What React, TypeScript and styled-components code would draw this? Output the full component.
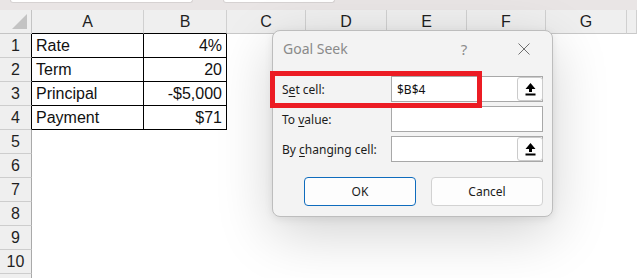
import React from 'react';
import styled, { createGlobalStyle } from 'styled-components';

const GlobalStyle = createGlobalStyle`
  html, body {
    margin: 0;
    padding: 0;
    background: #ffffff;
    overflow: hidden;
  }
  * {
    box-sizing: border-box;
  }
`;

const Page = styled.div`
  position: relative;
  width: 637px;
  height: 278px;
  overflow: hidden;
  background: #ffffff;
  font-family: 'Liberation Sans', Arial, sans-serif;
`;

const TopStrip = styled.div`
  height: 10px;
  background: #e9e5e5;
  display: flex;
  align-items: flex-start;
`;

const TopBox = styled.div<{ $w: number; $ml: number }>`
  width: ${p => p.$w}px;
  margin-left: ${p => p.$ml}px;
  height: 3px;
  background: #ffffff;
  border: 1px solid #d6d2d2;
  border-top: 0;
  border-radius: 0 0 3px 3px;
`;

const Sheet = styled.div`
  display: grid;
  grid-template-columns: 32px 112px 83px 79px 81px 80px 79px 81px 1fr;
  grid-auto-rows: 24px;
`;

const Corner = styled.div`
  position: relative;
  background: #efefef;
  border-right: 1px solid #c4c4c4;
  border-bottom: 1px solid #c4c4c4;
  &::after {
    content: '';
    position: absolute;
    right: 4px;
    bottom: 4px;
    width: 15px;
    height: 15px;
    background: #c3c3c3;
    clip-path: polygon(100% 0, 100% 100%, 0 100%);
  }
`;

const ColHead = styled.div<{ $dark?: boolean }>`
  background: #efefef;
  border-right: 1px solid #d0d0d0;
  border-bottom: 1px solid ${p => (p.$dark ? '#000000' : '#c8c8c8')};
  display: flex;
  align-items: center;
  justify-content: center;
  font-size: 16px;
  color: #1f1f1f;
  padding-top: 1px;
`;

const RowHead = styled.div<{ $dark?: boolean }>`
  background: #efefef;
  border-right: 1px solid ${p => (p.$dark ? '#000000' : '#a9a9a9')};
  border-bottom: 1px solid #cdcdcd;
  display: flex;
  align-items: center;
  justify-content: center;
  font-size: 16px;
  color: #1f1f1f;
  padding-top: 1px;
`;

const Cell = styled.div<{ $boxed?: boolean; $right?: boolean }>`
  border-right: 1px solid ${p => (p.$boxed ? '#000000' : 'transparent')};
  border-bottom: 1px solid ${p => (p.$boxed ? '#000000' : 'transparent')};
  display: flex;
  align-items: center;
  justify-content: ${p => (p.$right ? 'flex-end' : 'flex-start')};
  padding: 1px 4px 0 4px;
  font-size: 16px;
  color: #111111;
  white-space: nowrap;
`;

const Dialog = styled.div`
  position: absolute;
  left: 272px;
  top: 30px;
  width: 281px;
  height: 187px;
  background: #f3f3f3;
  border: 1px solid #bdbdbd;
  border-radius: 8px;
  box-shadow: 0 16px 56px rgba(0, 0, 0, 0.18), 0 2px 8px rgba(0, 0, 0, 0.08);
  font-family: 'Noto Sans', 'Segoe UI', sans-serif;
  color: #1b1b1b;
`;

const TitleBar = styled.div`
  height: 35px;
  display: flex;
  align-items: center;
  padding-left: 10px;
`;

const Title = styled.div`
  flex: 1;
  font-size: 14px;
  color: #8a8a8a;
  padding-bottom: 1px;
`;

const HelpMark = styled.div`
  width: 46px;
  text-align: center;
  font-size: 15px;
  color: #8c8c8c;
  margin-right: 14px;
`;

const CloseBox = styled.div`
  width: 46px;
  display: flex;
  justify-content: center;
  margin-right: 5px;
`;

const Body = styled.div`
  padding: 10px 9px 9px 9px;
  display: flex;
  flex-direction: column;
  gap: 4px;
`;

const FieldRow = styled.div`
  display: grid;
  grid-template-columns: 109px 152px;
  align-items: center;
  height: 26px;
`;

const Label = styled.div`
  font-size: 12px;
  color: #1b1b1b;
  u {
    text-decoration-thickness: 1px;
    text-underline-offset: 2px;
  }
`;

const InputBox = styled.div`
  height: 26px;
  background: #ffffff;
  border: 1px solid #a8a8a8;
  display: flex;
  align-items: center;
  padding-left: 5px;
  font-size: 12px;
  color: #111111;
`;

const RefButton = styled.div`
  margin-left: auto;
  margin-right: -1px;
  width: 26px;
  height: 24px;
  background: #fdfdfd;
  border: 1px solid #cbcbcb;
  border-radius: 3px;
  display: flex;
  align-items: center;
  justify-content: center;
`;

const RedFrame = styled.div`
  position: absolute;
  left: -3px;
  top: 40px;
  width: 212px;
  height: 37px;
  border: 5px solid #ec1c24;
  pointer-events: none;
`;

const ButtonRow = styled.div`
  display: flex;
  justify-content: flex-end;
  gap: 15px;
  margin-top: 11px;
`;

const DlgButton = styled.div<{ $primary?: boolean }>`
  width: 112px;
  height: 29px;
  background: #fdfdfd;
  border: 1px solid ${p => (p.$primary ? '#0f6cbd' : '#d2d2d2')};
  border-radius: 4px;
  display: flex;
  align-items: center;
  justify-content: center;
  font-size: 12px;
  color: #1b1b1b;
`;

const UploadIcon = () => (
  <svg width="11" height="14" viewBox="0 0 11 14">
    <path d="M5.5 1 L10.5 7 L7 7 L7 10 L4 10 L4 7 L0.5 7 Z" fill="#000" />
    <rect x="0.5" y="11.5" width="10" height="2" fill="#000" />
  </svg>
);

const CloseIcon = () => (
  <svg width="12" height="12" viewBox="0 0 12 12">
    <path d="M0.5 0.5 L11.5 11.5 M11.5 0.5 L0.5 11.5" stroke="#6f6f6f" strokeWidth="1" />
  </svg>
);

const columns = ['A', 'B', 'C', 'D', 'E', 'F', 'G', ''];

const data: [string, string][] = [
  ['Rate', '4%'],
  ['Term', '20'],
  ['Principal', '-$5,000'],
  ['Payment', '$71'],
];

// row 11 only peeks in at the bottom edge, its number is off screen
const visibleRows = 10;

export default function App() {
  const rows = Array.from({ length: 11 }, (_, i) => i + 1);

  return (
    <Page>
      <GlobalStyle />
      <TopStrip>
        <TopBox $w={183} $ml={10} />
        <TopBox $w={112} $ml={30} />
      </TopStrip>
      <Sheet>
        <Corner />
        {columns.map((c, i) => (
          <ColHead key={i} $dark={i < 2}>
            {c}
          </ColHead>
        ))}
        {rows.map(r => {
          const rec = data[r - 1];
          return (
            <React.Fragment key={r}>
              <RowHead $dark={!!rec}>{r <= visibleRows ? r : ''}</RowHead>
              <Cell $boxed={!!rec}>{rec ? rec[0] : ''}</Cell>
              <Cell $boxed={!!rec} $right>
                {rec ? rec[1] : ''}
              </Cell>
              {columns.slice(2).map((_, i) => (
                <Cell key={i} />
              ))}
            </React.Fragment>
          );
        })}
      </Sheet>

      <Dialog>
        <TitleBar>
          <Title>Goal Seek</Title>
          <HelpMark>?</HelpMark>
          <CloseBox>
            <CloseIcon />
          </CloseBox>
        </TitleBar>
        <Body>
          <FieldRow>
            <Label>
              S<u>e</u>t cell:
            </Label>
            <InputBox>
              $B$4
              <RefButton>
                <UploadIcon />
              </RefButton>
            </InputBox>
          </FieldRow>
          <FieldRow>
            <Label>
              To <u>v</u>alue:
            </Label>
            <InputBox />
          </FieldRow>
          <FieldRow>
            <Label>
              By <u>c</u>hanging cell:
            </Label>
            <InputBox>
              <RefButton>
                <UploadIcon />
              </RefButton>
            </InputBox>
          </FieldRow>
          <ButtonRow>
            <DlgButton $primary>OK</DlgButton>
            <DlgButton>Cancel</DlgButton>
          </ButtonRow>
        </Body>
        <RedFrame />
      </Dialog>
    </Page>
  );
}
